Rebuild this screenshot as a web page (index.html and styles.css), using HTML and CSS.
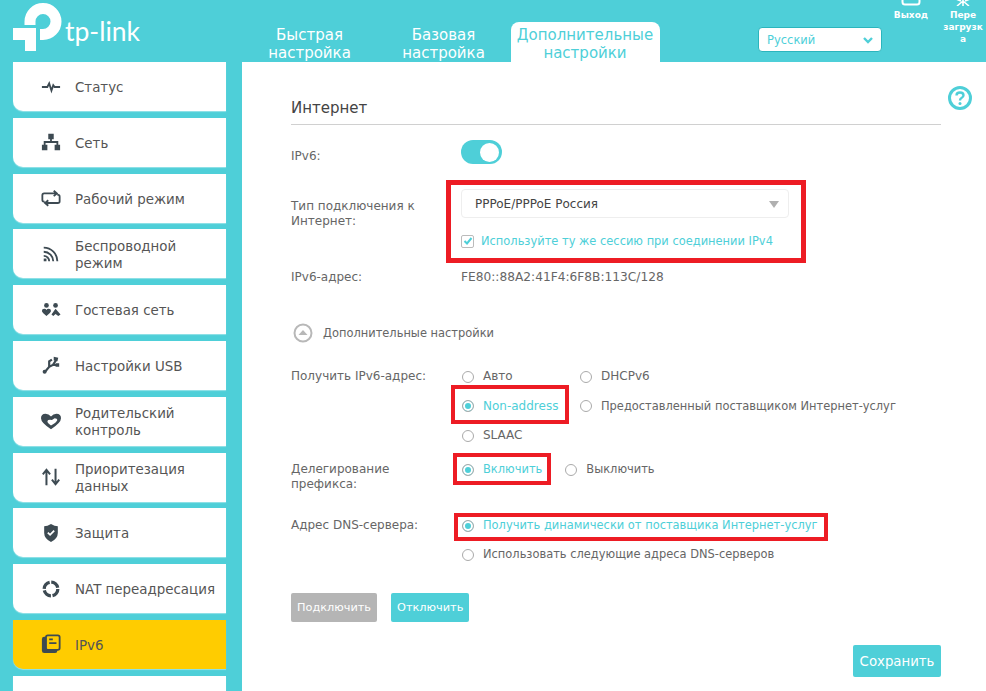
FILE: index.html
```html
<!DOCTYPE html>
<html lang="ru">
<head>
    <meta charset="UTF-8">
    <title>TP-Link - IPv6</title>
    <link rel="stylesheet" href="styles.css">
</head>
<body>
    <div class="page">
        <div class="header">
            <div class="logo">
                <svg class="logo-mark" width="50" height="50" viewBox="0 0 50 50">
                    <path d="M17 22 V18.500 A13 13 0 1 1 30 31.500 H27" fill="none" stroke="#fff" stroke-width="11"/>
                    <path d="M0 25 H23 V48 H12 V37 H0 Z" fill="#fff"/>
                </svg>
                <span class="logo-text">tp-link</span>
            </div>
            <div class="tabs">
                <div class="tab">Быстрая<br>настройка</div>
                <div class="tab">Базовая<br>настройка</div>
                <div class="tab active">Дополнительные<br>настройки</div>
            </div>
            <div class="lang">
                <span>Русский</span>
                <svg width="12" height="8" viewBox="0 0 12 8"><path d="M2 2 L6 6 L10 2" fill="none" stroke="#4ecfd8" stroke-width="2.4"/></svg>
            </div>
            <div class="actions">
                <div class="action action-exit">
                    <svg width="20" height="6" viewBox="0 0 20 6"><path d="M1.5 -4 V2 Q1.5 4.5 4 4.5 H16 Q18.5 4.5 18.5 2 V-4" fill="none" stroke="#fff" stroke-width="2"/></svg>
                    <span>Выход</span>
                </div>
                <div class="action action-reboot">
                    <svg width="20" height="6" viewBox="0 0 20 6"><path d="M10 -2 V6 M10 1 L4 6 M10 1 L16 6 M3 -1 L8 1 M17 -1 L12 1" fill="none" stroke="#fff" stroke-width="1.6"/></svg>
                    <span>Пере загрузк а</span>
                </div>
            </div>
        </div>

        <div class="main">
            <!-- left menu -->
            <div class="sidebar">
                <div class="item">
                    <svg class="icon" viewBox="0 0 22 22"><path d="M1 11 H7 L9 7 L11.5 15 L13.5 9 L15 11 H21" fill="none" stroke="#3d4a52" stroke-width="2"/></svg>
                    <span>Статус</span>
                </div>
                <div class="item">
                    <svg class="icon" viewBox="0 0 22 22"><path d="M8 2 H14 V8 H12 V10 H19 V14 H21 V20 H15 V14 H17 V12 H5 V14 H7 V20 H1 V14 H3 V10 H10 V8 H8 Z" fill="#3d4a52"/></svg>
                    <span>Сеть</span>
                </div>
                <div class="item">
                    <svg class="icon" viewBox="0 0 22 22"><path d="M4 15 H3 Q1.5 15 1.5 13 V8 Q1.5 6 3.5 6 H17 M14 3 L17.5 6 L14 9 M18 7.500 H19 Q20.500 7.500 20.500 9.500 V14.500 Q20.500 16.500 18.500 16.500 H5 M8 13.500 L4.500 16.500 L8 19.500" fill="none" stroke="#3d4a52" stroke-width="2"/></svg>
                    <span>Рабочий режим</span>
                </div>
                <div class="item">
                    <svg class="icon" viewBox="0 0 22 22"><path d="M3 4 A15 15 0 0 1 18 19 M3 8.500 A10.500 10.500 0 0 1 13.500 19 M3 13 A6 6 0 0 1 9 19" fill="none" stroke="#3d4a52" stroke-width="2"/><rect x="3" y="16" width="3" height="3" fill="#3d4a52"/></svg>
                    <span>Беспроводной<br>режим</span>
                </div>
                <div class="item">
                    <svg class="icon" viewBox="0 0 22 22"><circle cx="6" cy="6" r="2.600" fill="#3d4a52"/><circle cx="16" cy="6" r="2.600" fill="#3d4a52"/><path d="M1 12 Q1 9.500 3.500 9.500 Q5.500 9.500 6 11 Q6.500 9.500 8.500 9.500 Q11 9.500 11 12 Q11 13.500 6 17.500 Q1 13.500 1 12 Z M11.500 16 L16 9.500 L21.500 16 L19 17.500 L16 15.500 L13.500 17.500 Z" fill="#3d4a52"/></svg>
                    <span>Гостевая сеть</span>
                </div>
                <div class="item">
                    <svg class="icon" viewBox="0 0 22 22"><path d="M4 19 L9 13 L13 11 L17 5 M9 13 L9 7 L12 5 M13 11 L18 11" fill="none" stroke="#3d4a52" stroke-width="2.400"/><circle cx="4" cy="18.500" r="2.200" fill="#3d4a52"/><path d="M14 2 L19 3 L18 7 L14 6 Z M16 9 H20 V13 H16 Z" fill="#3d4a52"/></svg>
                    <span>Настройки USB</span>
                </div>
                <div class="item">
                    <svg class="icon" viewBox="0 0 22 22"><path d="M11 20 Q0 13 0 8 Q0 3 5 3 Q8.500 3 11 6 Q13.500 3 17 3 Q22 3 22 8 Q22 13 11 20 Z" fill="#3d4a52"/><path d="M11 16 Q5 12 8 10 Q10 9 12 10 L15 8 Q18 8 18 10 Q17 13 11 16 Z" fill="#fff"/></svg>
                    <span>Родительский<br>контроль</span>
                </div>
                <div class="item">
                    <svg class="icon" viewBox="0 0 22 22"><path d="M6 20 V5 M2 8 L6 3 L10 8 M16 2 V17 M12 14 L16 19 L20 14" fill="none" stroke="#3d4a52" stroke-width="2.200"/></svg>
                    <span>Приоритезация<br>данных</span>
                </div>
                <div class="item">
                    <svg class="icon" viewBox="0 0 22 22"><path d="M11 1 Q15 3.500 18.500 3.500 V11 Q18.500 17 11 21 Q3.500 17 3.500 11 V3.500 Q7 3.500 11 1 Z" fill="#3d4a52"/><path d="M7.500 10.500 L10 13 L14.500 8.500" fill="none" stroke="#fff" stroke-width="2"/></svg>
                    <span>Защита</span>
                </div>
                <div class="item">
                    <svg class="icon" viewBox="0 0 22 22"><circle cx="11" cy="11" r="7.500" fill="none" stroke="#3d4a52" stroke-width="3.600" stroke-dasharray="10 1.800"/></svg>
                    <span>NAT переадресация</span>
                </div>
                <div class="item selected">
                    <svg class="icon" viewBox="0 0 22 22"><rect x="1" y="3" width="17" height="18" rx="2.500" fill="#3d4a52"/><rect x="5.500" y="1.500" width="15" height="16" rx="2" fill="#ffcc00" stroke="#3d4a52" stroke-width="2"/><path d="M9 6 H13 M9 10 H17" stroke="#3d4a52" stroke-width="2"/></svg>
                    <span>IPv6</span>
                </div>
                <div class="item">
                    <svg class="icon" viewBox="0 0 22 22"><circle cx="11" cy="11" r="8" fill="#3d4a52"/></svg>
                </div>
            </div>

            <!-- form -->
            <div class="content">
                <div class="title">Интернет</div>
                <svg class="help" width="26" height="26" viewBox="0 0 26 26">
                    <circle cx="13" cy="13" r="10.500" fill="none" stroke="#4ecfd8" stroke-width="3"/>
                    <path d="M9.500 10.500 Q9.500 7.500 13 7.500 Q16.500 7.500 16.500 10.300 Q16.500 12 14.500 13 Q13 13.800 13 15.500" fill="none" stroke="#4ecfd8" stroke-width="2.400"/>
                    <circle cx="13" cy="18.500" r="1.500" fill="#4ecfd8"/>
                </svg>

                <div class="row row-ipv6">
                    <div class="label">IPv6:</div>
                    <div class="toggle"><div class="knob"></div></div>
                </div>

                <div class="row row-type">
                    <div class="label">Тип подключения к Интернет:</div>
                    <div class="field">
                        <div class="select">
                            <span>PPPoE/PPPoE Россия</span>
                            <div class="caret"></div>
                        </div>
                        <div class="check">
                            <div class="checkbox">
                                <svg width="10" height="10" viewBox="0 0 10 10"><path d="M1.500 5 L4 7.500 L8.500 2" fill="none" stroke="#4ecfd8" stroke-width="2"/></svg>
                            </div>
                            <span class="tight">Используйте ту же сессию при соединении IPv4</span>
                        </div>
                    </div>
                </div>

                <div class="row row-addr">
                    <div class="label">IPv6-адрес:</div>
                    <div class="value">FE80::88A2:41F4:6F8B:113C/128</div>
                </div>

                <div class="advanced">
                    <svg width="20" height="20" viewBox="0 0 20 20">
                        <circle cx="10" cy="10" r="8.500" fill="none" stroke="#b8b8b8" stroke-width="2"/>
                        <path d="M5.500 12 L10 7 L14.500 12 Z" fill="#b8b8b8"/>
                    </svg>
                    <span class="tight">Дополнительные настройки</span>
                </div>

                <div class="row row-get">
                    <div class="label">Получить IPv6-адрес:</div>
                    <div class="radio-grid">
                        <div class="radio"><i></i>Авто</div>
                        <div class="radio"><i></i>DHCPv6</div>
                        <div class="radio on"><i></i>Non-address</div>
                        <div class="radio tight"><i></i>Предоставленный поставщиком Интернет-услуг</div>
                        <div class="radio"><i></i>SLAAC</div>
                    </div>
                </div>

                <div class="row row-prefix">
                    <div class="label">Делегирование префикса:</div>
                    <div class="radio-line">
                        <div class="radio on tight"><i></i>Включить</div>
                        <div class="radio tight"><i></i>Выключить</div>
                    </div>
                </div>

                <div class="row row-dns">
                    <div class="label">Адрес DNS-сервера:</div>
                    <div class="radio-stack">
                        <div class="radio on tight"><i></i>Получить динамически от поставщика Интернет-услуг</div>
                        <div class="radio tight"><i></i>Использовать следующие адреса DNS-серверов</div>
                    </div>
                </div>

                <div class="buttons">
                    <div class="btn disabled">Подключить</div>
                    <div class="btn">Отключить</div>
                </div>

                <div class="save-line">
                    <div class="btn save">Сохранить</div>
                </div>
            </div>
        </div>

        <!-- red marks drawn over the screenshot -->
        <div class="mark mark-type"></div>
        <div class="mark mark-nonaddr"></div>
        <div class="mark mark-prefix"></div>
        <div class="mark mark-dns"></div>
    </div>
</body>
</html>
```

FILE: styles.css
```css
body {
    margin: 0;
    font-family: "DejaVu Sans", sans-serif;
    font-size: 12px;
    color: #666;
}

.page {
    position: relative;
    width: 986px;
    height: 691px;
    overflow: hidden;
    background-color: #4ecfd8;
}

.tight {
    font-size: 11.45px;
}

.header {
    display: flex;
    height: 62px;
}

.logo {
    display: flex;
    width: 242px;
    padding: 3px 0 0 13px;
    box-sizing: border-box;
}

.logo-mark {
    flex: none;
}

.logo-text {
    margin: 10px 0 0 2px;
    font-family: Lato, sans-serif;
    font-size: 26.5px;
    line-height: 36px;
    color: #fff;
}

.tabs {
    display: flex;
    margin-left: 0.5px;
    padding-top: 22px;
}

.tab {
    width: 134px;
    height: 40px;
    font-size: 15px;
    line-height: 18px;
    padding-top: 3.5px;
    box-sizing: border-box;
    text-align: center;
    color: #fff;
}

.tab.active {
    width: 149px;
    background-color: #fff;
    color: #4ecfd8;
    border-radius: 8px 8px 0 0;
}

.lang {
    display: flex;
    justify-content: space-between;
    align-items: center;
    width: 124px;
    height: 25px;
    margin: 27px 0 0 98.5px;
    padding: 0 7px 0 8px;
    box-sizing: border-box;
    background-color: #fff;
    border: 1px solid #2bb5bd;
    border-radius: 4px;
    font-size: 11.5px;
    color: #4ecfd8;
}

.actions {
    display: flex;
    margin-left: 8px;
}

.action {
    display: flex;
    flex-direction: column;
    align-items: center;
    font-size: 9px;
    font-weight: bold;
    line-height: 12px;
    text-align: center;
    color: #fff;
}

.action span {
    margin-top: 3px;
}

.action-exit {
    width: 42px;
}

.action-reboot {
    width: 40px;
    margin-left: 11px;
}

.main {
    display: flex;
}

.sidebar {
    display: flex;
    flex-direction: column;
    gap: 6.8px;
    width: 242px;
    flex: none;
    padding-left: 13px;
    padding-right: 16px;
    box-sizing: border-box;
}

.item {
    display: flex;
    align-items: center;
    flex: none;
    height: 49px;
    padding-left: 28px;
    background-color: #fff;
    border-radius: 0 0 0 10px;
    box-shadow: 0 1px 1px rgba(255, 255, 255, 0.4);
    font-size: 13.4px;
    line-height: 17px;
    color: #555;
}

.item span {
    margin-top: 2px;
}

.item.selected {
    background-color: #ffcc00;
}

.icon {
    flex: none;
    width: 20px;
    height: 20px;
    margin-right: 14px;
}

.content {
    position: relative;
    flex: 1;
    height: 629px;
    padding: 0 45px 0 49px;
    background-color: #fff;
}

.title {
    height: 63px;
    box-sizing: border-box;
    padding-top: 36px;
    border-bottom: 1px solid #d0d0d0;
    font-size: 15px;
    line-height: 20px;
    color: #444;
}

.help {
    position: absolute;
    top: 23px;
    right: 13px;
}

.row {
    display: flex;
}

.label {
    flex: none;
    width: 140px;
    margin-right: 30px;
    line-height: 15px;
}

.row-ipv6 {
    margin-top: 15px;
}

.row-ipv6 .label {
    padding-top: 9px;
}

.toggle {
    display: flex;
    justify-content: flex-end;
    align-items: center;
    width: 41px;
    height: 24px;
    padding-right: 3px;
    box-sizing: border-box;
    background-color: #4ecfd8;
    border-radius: 12px;
}

.knob {
    width: 19px;
    height: 19px;
    background-color: #fff;
    border-radius: 50%;
}

.row-type {
    margin-top: 25px;
}

.row-type .label {
    padding-top: 10px;
}

.select {
    display: flex;
    justify-content: space-between;
    align-items: center;
    width: 328px;
    height: 29px;
    padding: 1px 9px 0 13px;
    box-sizing: border-box;
    border: 1px solid #eee;
    border-radius: 4px;
    color: #444;
}

.caret {
    border-left: 5px solid transparent;
    border-right: 5px solid transparent;
    border-top: 7px solid #b0b0b0;
}

.check {
    display: flex;
    align-items: center;
    gap: 7px;
    margin-top: 16px;
    color: #4ecfd8;
}

.checkbox {
    display: flex;
    justify-content: center;
    align-items: center;
    width: 11px;
    height: 11px;
    border: 1px solid #bbb;
    border-radius: 2px;
}

.row-addr {
    margin-top: 22px;
    line-height: 15px;
}

.value {
    font-size: 12.2px;
}

.advanced {
    display: flex;
    align-items: center;
    gap: 10px;
    margin: 38px 0 0 2px;
    height: 20px;
}

.radio {
    display: flex;
    align-items: center;
    height: 15px;
    line-height: 15px;
}

.radio i {
    flex: none;
    width: 10px;
    height: 10px;
    margin-right: 9px;
    border: 1px solid #aaa;
    border-radius: 50%;
    background-color: #fff;
}

.radio.on {
    color: #4ecfd8;
}

.radio.on i {
    background-color: #4ecfd8;
    box-shadow: inset 0 0 0 2px #fff;
}

.row-get {
    margin-top: 26px;
}

.radio-grid {
    display: grid;
    grid-template-columns: 118px auto;
    row-gap: 14.500px;
    margin-left: 1px;
}

.row-prefix {
    margin-top: 19px;
}

.radio-line {
    display: flex;
    gap: 23px;
    margin-left: 1px;
}

.row-dns {
    margin-top: 26px;
}

.radio-stack {
    display: flex;
    flex-direction: column;
    gap: 14px;
    margin-left: 1px;
}

.buttons {
    display: flex;
    gap: 14px;
    margin-top: 31px;
    font-size: 11.3px;
}

.btn {
    display: flex;
    justify-content: center;
    align-items: center;
    height: 29px;
    padding: 0 6px;
    background-color: #4ecfd8;
    border-radius: 2px;
    color: #fff;
}

.btn.disabled {
    background-color: #b5b5b5;
}

.save-line {
    display: flex;
    justify-content: flex-end;
    margin-top: 23px;
}

.btn.save {
    width: 88px;
    height: 32px;
    padding: 0;
    font-size: 13.3px;
}

.mark {
    position: absolute;
    box-sizing: border-box;
    border: 4px solid #ed1c24;
}

.mark-type {
    left: 446px;
    top: 180px;
    width: 360px;
    height: 83px;
    border-width: 5px;
}

.mark-nonaddr {
    left: 451px;
    top: 385px;
    width: 118px;
    height: 39px;
}

.mark-prefix {
    left: 453px;
    top: 453px;
    width: 98px;
    height: 32px;
}

.mark-dns {
    left: 454px;
    top: 513px;
    width: 374px;
    height: 28px;
}
```
